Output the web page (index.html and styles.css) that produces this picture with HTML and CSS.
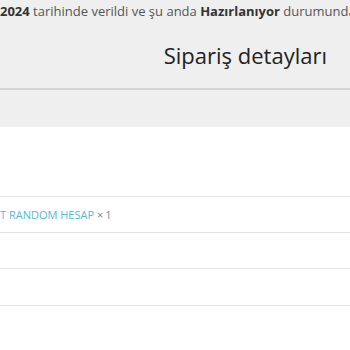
FILE: index.html
```html
<!DOCTYPE html>
<html lang="tr">
<head>
    <meta charset="UTF-8">
    <meta name="viewport" content="width=device-width, initial-scale=1.0">
    <title>Sipariş detayları</title>
    <link rel="stylesheet" href="styles.css">
</head>
<body>
    <!-- Order header -->
    <div class="order-top">
        <p class="order-notice"><b>2024</b> tarihinde verildi ve şu anda <b>Hazırlanıyor</b> durumundadır.</p>
        <h2 class="order-title">Sipariş detayları</h2>
        <div class="order-sub"></div>
    </div>

    <!-- Order table -->
    <div class="order-table">
        <div class="row row-head"></div>
        <div class="row">
            <span class="product-name">T RANDOM HESAP</span>
            <span class="qty">&times;&thinsp;1</span>
        </div>
        <div class="row"></div>
        <div class="row"></div>
    </div>
</body>
</html>
```

FILE: styles.css
```css
body {
    font-family: 'Open Sans', sans-serif;
    background-color: #fff;
    margin: 0;
    padding: 0;
    overflow: hidden;
}

.order-top {
    background-color: #efefef;
}

.order-notice {
    margin: 0;
    padding: 2px 0 0;
    font-size: 13px;
    line-height: 18px;
    color: #555;
    white-space: nowrap;
    overflow: hidden;
}

.order-notice b {
    color: #333;
}

.order-title {
    margin: 0;
    padding: 21px 23px 19px 0;
    text-align: right;
    font-size: 22px;
    font-weight: normal;
    line-height: 28px;
    color: #222;
    border-bottom: 2px solid #d4d4d4;
}

.order-sub {
    height: 37px;
}

.order-table .row {
    display: flex;
    align-items: center;
    height: 35px;
    border-bottom: 1px solid #e6e6e6;
    font-size: 11px;
}

.order-table .row-head {
    height: 69px;
}

.order-table .row:last-child {
    height: 36px;
}

.product-name {
    color: #5bb8d3;
}

.qty {
    color: #888;
    margin-left: 3px;
}
```
